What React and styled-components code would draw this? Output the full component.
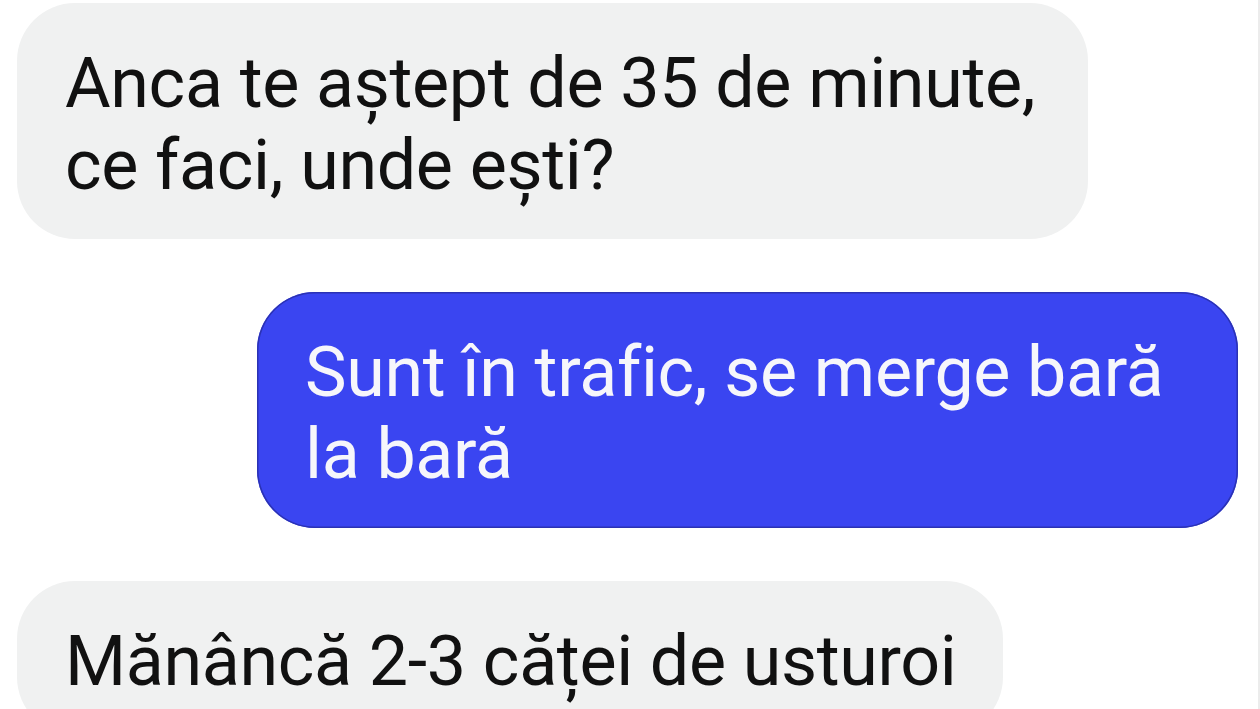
import React from "react";
import styled, { createGlobalStyle } from "styled-components";

const Global = createGlobalStyle`
  html, body { margin: 0; padding: 0; background: #ffffff; }
  body { font-family: Roboto, "Noto Sans", "Liberation Sans", sans-serif; overflow: hidden; }
`;

const Page = styled.div`
  width: 1260px;
  height: 709px;
  box-sizing: border-box;
  padding: 3px 20px 0 17px;
  display: flex;
  flex-direction: column;
  gap: 53px;
  overflow: hidden;
  border-right: 2px solid #ececec;
`;

const Row = styled.div`
  display: flex;
  justify-content: ${(p) => (p.$out ? "flex-end" : "flex-start")};
`;

const Bubble = styled.div`
  box-sizing: border-box;
  width: ${(p) => p.$w}px;
  flex: none;
  padding: 39px 40px 33px 48px;
  border-radius: 58px;
  font-size: 70px;
  line-height: 82px;
  letter-spacing: -0.35px;
  background: ${(p) => (p.$out ? "#3a45f1" : "#f0f1f1")};
  color: ${(p) => (p.$out ? "#f6f6fb" : "#111111")};
  box-shadow: ${(p) => (p.$out ? "inset 0 0 0 1.5px #2b32b4" : "none")};
  white-space: nowrap;
`;

export default function App() {
  return (
    <>
      <Global />
      <Page>
        <Row>
          <Bubble $w={1071}>
            Anca te aștept de 35 de minute,
            <br />
            ce faci, unde ești?
          </Bubble>
        </Row>
        <Row $out>
          <Bubble $out $w={981}>
            Sunt în trafic, se merge bară
            <br />
            la bară
          </Bubble>
        </Row>
        <Row>
          <Bubble $w={986}>Mănâncă 2-3 căței de usturoi</Bubble>
        </Row>
      </Page>
    </>
  );
}
